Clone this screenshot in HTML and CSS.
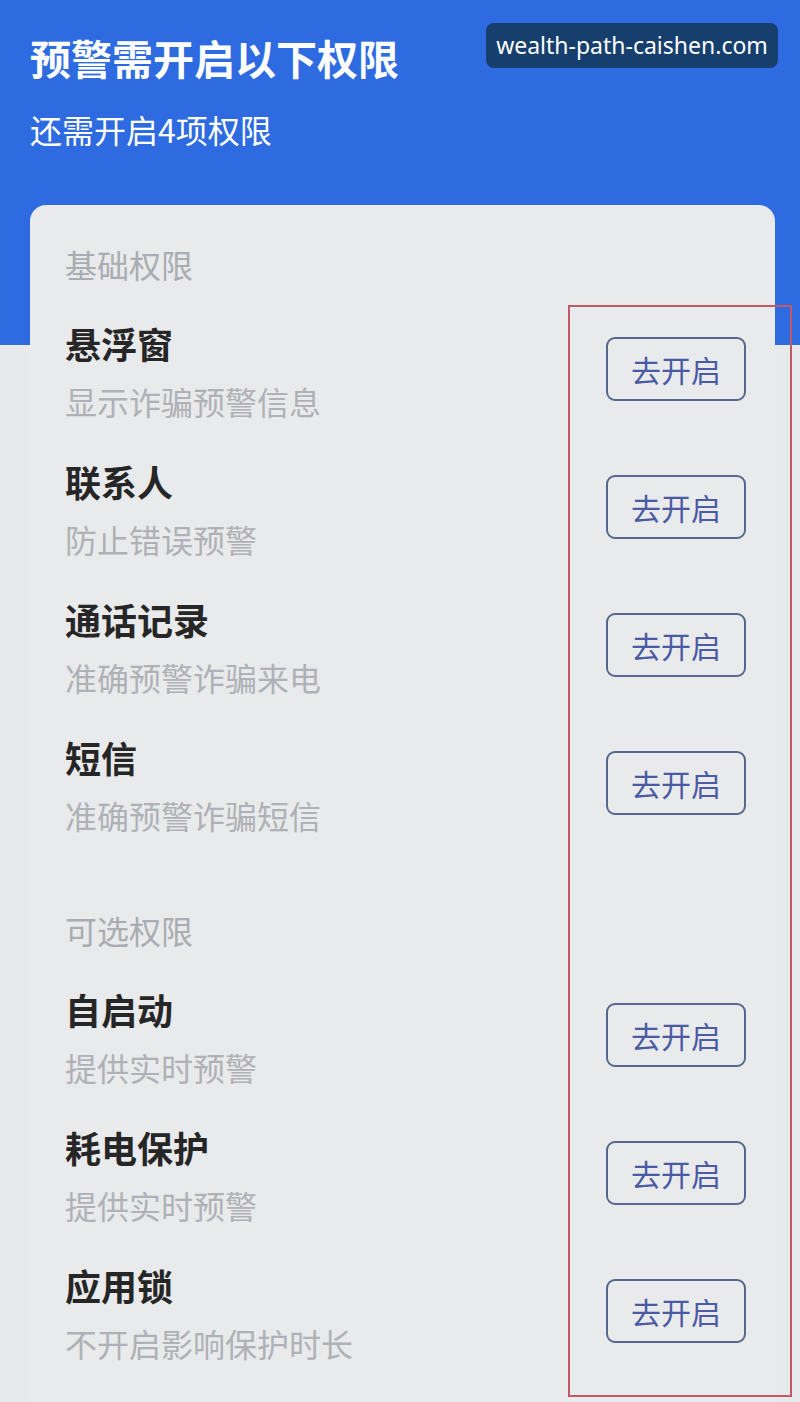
FILE: index.html
```html
<!DOCTYPE html>
<html lang="zh-CN">
<head>
  <meta charset="UTF-8" />
  <title>预警需开启以下权限</title>
  <link rel="stylesheet" href="styles.css">
</head>
<body>
  <header>
    <h1>预警需开启以下权限</h1>
    <p class="resto">还需开启4项权限</p>
  </header>

  <div class="marca">wealth-path-caishen.com</div>

  <main class="tarjeta">
    <div class="grupo">基础权限</div>

    <div class="fila">
      <div class="texto">
        <div class="nombre">悬浮窗</div>
        <div class="desc">显示诈骗预警信息</div>
      </div>
      <button class="abrir">去开启</button>
    </div>
    <div class="fila">
      <div class="texto">
        <div class="nombre">联系人</div>
        <div class="desc">防止错误预警</div>
      </div>
      <button class="abrir">去开启</button>
    </div>
    <div class="fila">
      <div class="texto">
        <div class="nombre">通话记录</div>
        <div class="desc">准确预警诈骗来电</div>
      </div>
      <button class="abrir">去开启</button>
    </div>
    <div class="fila">
      <div class="texto">
        <div class="nombre">短信</div>
        <div class="desc">准确预警诈骗短信</div>
      </div>
      <button class="abrir">去开启</button>
    </div>

    <div class="grupo opcional">可选权限</div>

    <div class="fila">
      <div class="texto">
        <div class="nombre">自启动</div>
        <div class="desc">提供实时预警</div>
      </div>
      <button class="abrir">去开启</button>
    </div>
    <div class="fila">
      <div class="texto">
        <div class="nombre">耗电保护</div>
        <div class="desc">提供实时预警</div>
      </div>
      <button class="abrir">去开启</button>
    </div>
    <div class="fila">
      <div class="texto">
        <div class="nombre">应用锁</div>
        <div class="desc">不开启影响保护时长</div>
      </div>
      <button class="abrir">去开启</button>
    </div>
  </main>

  <!-- marco rojo de anotación sobre la columna de botones -->
  <div class="marco"></div>
</body>
</html>
```

FILE: styles.css
```css
body {
  font-family: "Noto Sans CJK SC", "Noto Sans", sans-serif;
  background: linear-gradient(#2e6be1 0, #2e6be1 345px, #e8e9eb 345px);
  margin: 0;
  padding: 0;
  min-height: 1402px;
  position: relative;
  overflow: hidden;
}
header {
  padding: 29px 30px 54px;
  color: #fff;
}
h1 {
  margin: 0;
  font-size: 41px;
  line-height: 56px;
  font-weight: bold;
}
.resto {
  margin: 22px 0 0;
  font-size: 32px;
  line-height: 44px;
}
.marca {
  position: absolute;
  top: 23px;
  left: 486px;
  width: 292px;
  height: 45px;
  background-color: #173f6e;
  border-radius: 8px;
  color: #fff;
  font-family: "Noto Sans", sans-serif;
  font-size: 23px;
  line-height: 45px;
  text-align: center;
}
.tarjeta {
  margin: 0 25px 0 30px;
  background-color: #e9eaec;
  border-radius: 16px 16px 0 0;
  padding: 37px 29px 20px 35px;
  min-height: 1140px;
}
.grupo {
  font-size: 32px;
  line-height: 44px;
  color: #a9acb1;
  margin-bottom: 16px;
}
.grupo.opcional {
  margin-top: 54px;
}
.fila {
  display: flex;
  align-items: center;
  justify-content: space-between;
  padding: 17px 0;
}
.nombre {
  font-size: 36px;
  line-height: 48px;
  font-weight: bold;
  color: #262626;
}
.desc {
  margin-top: 12px;
  font-size: 32px;
  line-height: 44px;
  color: #afb1b6;
}
.abrir {
  width: 140px;
  height: 64px;
  margin-bottom: 4px;
  background: transparent;
  border: 2px solid #56678f;
  border-radius: 9px;
  color: #4a5ba3;
  font-family: inherit;
  font-size: 30px;
  padding: 0;
  cursor: pointer;
}
.marco {
  position: absolute;
  top: 305px;
  left: 568px;
  width: 220px;
  height: 1088px;
  border: 2px solid #c25a66;
}
```
